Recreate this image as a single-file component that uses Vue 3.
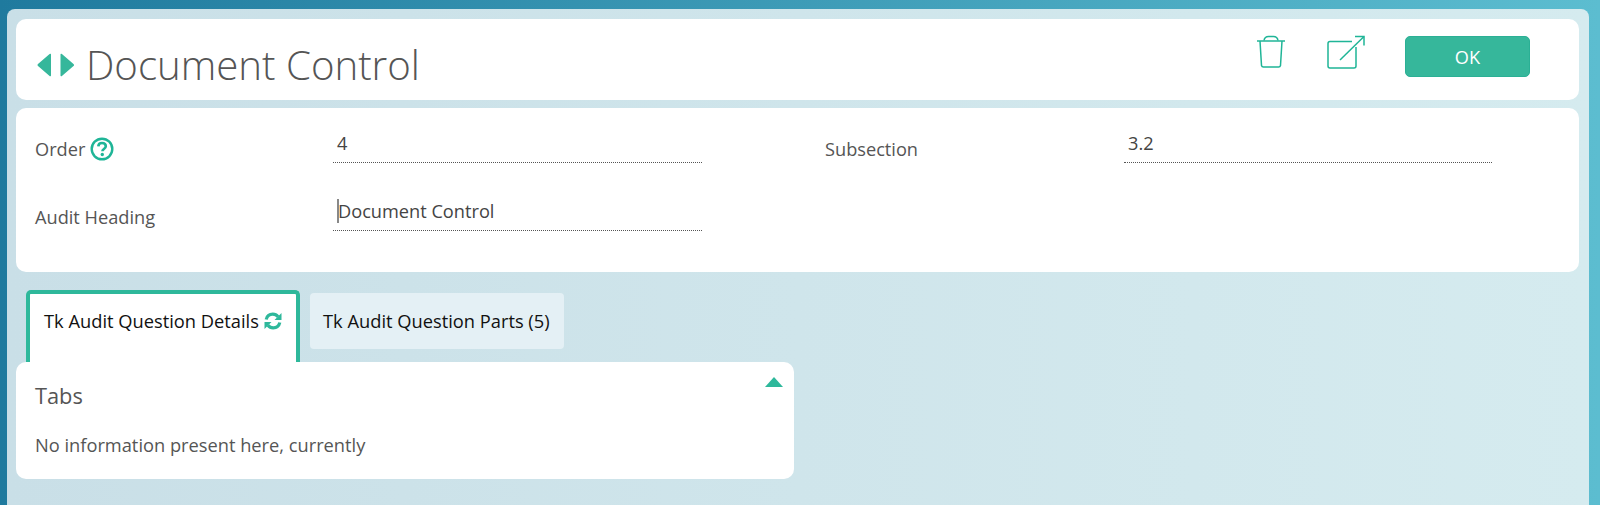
<script setup>
const fields = [
  { label: 'Order', value: '4', help: true },
  { label: 'Subsection', value: '3.2' },
  { label: 'Audit Heading', value: 'Document Control', caret: true }
]
</script>

<template>
  <div class="page">
    <div class="shell">
      <header class="card head">
        <div class="title-wrap">
          <svg class="arrows" width="37" height="24" viewBox="0 0 37 24">
            <path d="M14 1.500V22.500a.8 .8 0 0 1-1.400.5L1 13a1.400 1.400 0 0 1 0-2L12.600 1a.8 .8 0 0 1 1.400.5Z" fill="#36b79b" />
            <path d="M23.500 1.500V22.500a.8 .8 0 0 0 1.400.5L36.500 13a1.400 1.400 0 0 0 0-2L24.900 1a.8 .8 0 0 0-1.400.5Z" fill="#36b79b" />
          </svg>
          <h1 class="title">Document Control</h1>
        </div>
        <div class="actions">
          <svg class="icon-trash" width="30" height="34" viewBox="0 0 30 34" fill="none" stroke="#1fb597" stroke-width="1.500">
            <path d="M1 6H29" />
            <path d="M4 6L5.500 30.500a2 2 0 0 0 2 1.500H22.500a2 2 0 0 0 2-1.500L26 6" />
            <path d="M8 5.500C8.500 2.500 10.500 1.500 12.500 1.500H17.500C19.500 1.500 21.500 2.500 22 5.500" />
          </svg>
          <svg class="icon-open" width="38" height="34" viewBox="0 0 38 34" fill="none" stroke="#1fb597" stroke-width="1.500">
            <path d="M25 6.500H3a2 2 0 0 0-2 2V31a2 2 0 0 0 2 2H27a2 2 0 0 0 2-2V12" />
            <path d="M13 25L37 1.500" />
            <path d="M28 1.500H37V10.500" />
          </svg>
          <button class="ok">OK</button>
        </div>
      </header>

      <section class="card form">
        <template v-for="f in fields" :key="f.label">
          <div class="label">
            {{ f.label }}
            <svg v-if="f.help" class="help" width="24" height="24" viewBox="0 0 24 24" fill="none">
              <circle cx="12" cy="12" r="10.300" stroke="#1fb597" stroke-width="2.400" />
              <path d="M8.300 9.300C8.500 7 10 6 12 6c2.300 0 3.800 1.300 3.800 3.200 0 2.800-3.400 2.800-3.400 5" stroke="#1fb597" stroke-width="2.600" fill="none" />
              <circle cx="12.300" cy="17.500" r="1.700" fill="#1fb597" />
            </svg>
          </div>
          <div class="field">
            <span v-if="f.caret" class="caret"></span>{{ f.value }}
          </div>
        </template>
      </section>

      <nav class="tabs">
        <div class="tab active">
          Tk Audit Question Details
          <svg class="sync" width="18" height="18" viewBox="0 0 18 18" fill="none" stroke="#2eb89b" stroke-width="3.200">
            <path d="M2.200 7.500C3 4 5.800 2.200 8.800 2.200c2.200 0 4 1 5.200 2.600" />
            <path d="M15.800 10.500C15 14 12.200 15.800 9.200 15.800c-2.200 0-4-1-5.200-2.600" />
            <path d="M17.500 1V8H10.500Z" fill="#2eb89b" stroke="none" />
            <path d="M0.500 17V10H7.500Z" fill="#2eb89b" stroke="none" />
          </svg>
        </div>
        <div class="tab">Tk Audit Question Parts (5)</div>
      </nav>

      <section class="card panel">
        <span class="collapse"></span>
        <h2 class="panel-title">Tabs</h2>
        <p class="empty">No information present here, currently</p>
      </section>
    </div>
  </div>
</template>

<style>
html, body { margin: 0; padding: 0; height: 100%; overflow: hidden; }
</style>

<style scoped>
.page {
  box-sizing: border-box;
  height: 505px;
  padding: 9px 11px 0 7px;
  overflow: hidden;
  background: linear-gradient(90deg, #1f7a9e 0%, #5cbdd0 100%);
  font-family: "Open Sans", sans-serif;
  color: #555;
}
.shell {
  box-sizing: border-box;
  height: 496px;
  padding: 10px 10px 0 9px;
  border-radius: 8px 8px 0 0;
  background: linear-gradient(90deg, #c9dfe7 0%, #d5ebef 100%);
}
.card { background: #fff; border-radius: 10px; }
.head {
  height: 81px;
  display: flex;
  justify-content: space-between;
  box-sizing: border-box;
}
.title-wrap { display: flex; align-items: center; padding: 11px 0 0 21px; }
.arrows { display: block; }
.title {
  margin: 0 0 0 12px;
  font-size: 40.2px;
  font-weight: 300;
  line-height: 54px;
  color: #555;
}
.actions {
  display: flex;
  align-items: flex-start;
  padding: 16px 49px 0 0;
}
.icon-open { margin: 0 0 0 41px; }
.ok {
  width: 125px;
  height: 41px;
  margin: 1px 0 0 40px;
  border: 1px solid #2bb095;
  border-radius: 5px;
  background: #36b79b;
  color: #fff;
  font: 400 18.2px "Open Sans", sans-serif;
}
.form {
  margin-top: 8px;
  height: 164px;
  box-sizing: border-box;
  padding: 5px 0 0 19px;
  display: grid;
  grid-template-columns: 298px 369px 123px 299px 368px;
  grid-template-rows: 68px 68px;
}
.label {
  display: flex;
  align-items: center;
  gap: 5px;
  padding-top: 4px;
  height: 68px;
  box-sizing: border-box;
  font-size: 18.2px;
  color: #555;
}
.field {
  box-sizing: border-box;
  border-bottom: 1px dotted #555;
  padding: 18px 0 0 4px;
  position: relative;
  font-size: 18.2px;
  line-height: 24px;
  color: #444;
  height: 50px;
}
.field:has(.caret) { padding-left: 5px; }
.form .label:nth-child(3) { grid-column: 4; }
.form .label:nth-child(5) { grid-column: 1; }
.caret {
  position: absolute;
  left: 4px;
  top: 18px;
  width: 2px;
  height: 24px;
  background: #888;
}
.tabs {
  display: flex;
  align-items: flex-start;
  gap: 10px;
  padding: 18px 0 0 10px;
  height: 72px;
}
.tab {
  box-sizing: border-box;
  height: 56px;
  margin-top: 3px;
  padding: 0 14px 0 13px;
  line-height: 56px;
  border-radius: 4px;
  background: #e4f0f5;
  color: #111;
  font-size: 18.3px;
}
.tab.active {
  height: 72px;
  margin-top: 0;
  width: 274px;
  padding: 13px 0 0 14px;
  line-height: 28px;
  display: flex;
  align-items: flex-start;
  gap: 5px;
  border: 4px solid #2eb89b;
  border-bottom: 0;
  background: #fff;
  border-radius: 5px 5px 0 0;
  white-space: nowrap;
}
.sync { margin-top: 5px; }
.panel {
  position: relative;
  width: 778px;
  height: 117px;
  box-sizing: border-box;
  padding: 20px 19px;
}
.panel-title {
  margin: 0;
  font-size: 21.8px;
  font-weight: 400;
  line-height: 28px;
  color: #555;
}
.empty {
  margin: 23px 0 0;
  font-size: 18.25px;
  line-height: 24px;
  color: #555;
}
.collapse {
  position: absolute;
  right: 11px;
  top: 15px;
  width: 0;
  height: 0;
  border-left: 9px solid transparent;
  border-right: 9px solid transparent;
  border-bottom: 10px solid #2eb89b;
}
</style>
